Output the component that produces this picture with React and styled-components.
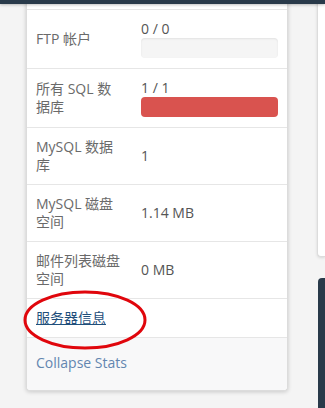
import React from "react";
import styled, { createGlobalStyle } from "styled-components";

const Global = createGlobalStyle`
  html, body { margin: 0; padding: 0; }
  body {
    background: #f4f4f4;
    font-family: "Open Sans", "Noto Sans CJK SC", sans-serif;
    font-size: 14px;
    overflow: hidden;
  }
`;

const TopBar = styled.div`
  position: fixed;
  top: 0;
  left: 0;
  right: 0;
  height: 4px;
  background: #293a4a;
  box-shadow: 0 1px 3px rgba(0, 0, 0, 0.25);
  z-index: 5;
`;

const Layout = styled.div`
  display: flex;
  align-items: flex-start;
  padding-left: 26px;
  width: 325px;
  box-sizing: border-box;
`;

const Card = styled.div`
  position: relative;
  width: 262px;
  flex: none;
  background: #fff;
  border: 1px solid #dcdcdc;
  border-top: none;
  border-radius: 0 0 4px 4px;
  box-shadow: 0 1px 4px rgba(0, 0, 0, 0.18);
  box-sizing: border-box;
`;

const Stub = styled.div`
  height: 9px;
`;

const Row = styled.div`
  display: grid;
  grid-template-columns: 88px 1fr;
  column-gap: 17px;
  align-items: center;
  padding: 10px 9px 10px 9px;
  border-top: 1px solid #e6e6e6;
  line-height: 18px;
`;

const Label = styled.div`
  color: #6a6a6a;
`;

const Value = styled.div`
  color: #555;
`;

const Bar = styled.div`
  height: 20px;
  border-radius: 4px;
  background: ${(p) => (p.$full ? "#d9534f" : "#f5f5f5")};
  box-shadow: ${(p) => (p.$full ? "none" : "inset 0 1px 2px rgba(0,0,0,0.08)")};
`;

const LinkRow = styled.div`
  padding: 10px 9px;
  border-top: 1px solid #e6e6e6;
  line-height: 18px;
`;

const Link = styled.a`
  color: #1f4f7b;
  text-decoration: underline;
`;

const Footer = styled.div`
  padding: 16px 9px 18px;
  border-top: 1px solid #e6e6e6;
  background: #f8f8f9;
  line-height: 18px;
  color: #6386b0;
  border-radius: 0 0 4px 4px;
`;

const Ellipse = styled.svg`
  position: absolute;
  left: -4px;
  top: 288px;
  pointer-events: none;
`;

const Side = styled.div`
  margin-left: 29px;
  flex: 1;
  display: flex;
  flex-direction: column;
`;

const SidePanel = styled.div`
  height: 256px;
  background: #fff;
  border-left: 1px solid #dcdcdc;
  border-bottom: 1px solid #dcdcdc;
  border-radius: 0 0 0 4px;
  box-shadow: 0 1px 3px rgba(0, 0, 0, 0.12);
`;

const SideDark = styled.div`
  margin-top: 21px;
  margin-left: 1px;
  height: 140px;
  background: #293a4a;
  border-radius: 4px 0 0 0;
`;

const rows = [
  { label: "FTP 帐户", value: "0 / 0", bar: "empty" },
  { label: "所有 SQL 数据库", value: "1 / 1", bar: "full" },
  { label: "MySQL 数据库", value: "1" },
  { label: "MySQL 磁盘空间", value: "1.14 MB" },
  { label: "邮件列表磁盘空间", value: "0 MB" },
];

export default function App() {
  return (
    <>
      <Global />
      <TopBar />
      <Layout>
        <Card>
          <Stub />
          {rows.map((r) => (
            <Row key={r.label}>
              <Label>{r.label}</Label>
              <Value>
                {r.value}
                {r.bar && <Bar $full={r.bar === "full"} />}
              </Value>
            </Row>
          ))}
          <LinkRow>
            <Link href="#">服务器信息</Link>
          </LinkRow>
          <Footer>Collapse Stats</Footer>
          <Ellipse width="128" height="64" viewBox="0 0 128 64">
            <ellipse cx="62" cy="32" rx="60" ry="28" fill="none" stroke="#e0060c" strokeWidth="3" />
          </Ellipse>
        </Card>
        <Side>
          <SidePanel />
          <SideDark />
        </Side>
      </Layout>
    </>
  );
}
